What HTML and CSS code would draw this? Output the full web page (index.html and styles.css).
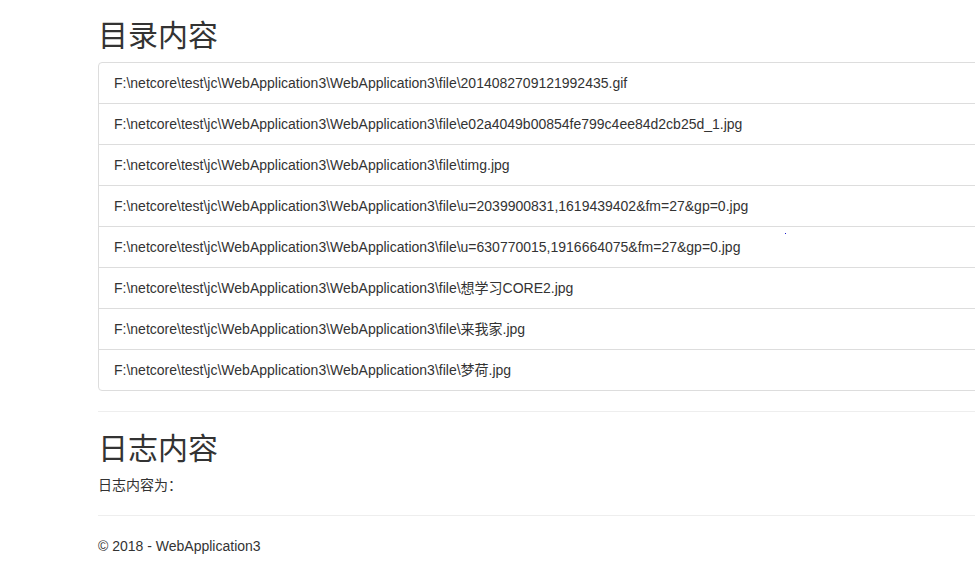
FILE: index.html
```html
<!DOCTYPE html>
<html lang="zh-CN">
<head>
    <meta charset="UTF-8">
    <meta name="viewport" content="width=device-width, initial-scale=1.0">
    <title>WebApplication3</title>
    <link rel="stylesheet" href="styles.css">
</head>
<body>
    <div class="container body-content">
        <h2>目录内容</h2>
        <ul class="list-group">
            <li class="list-group-item">F:\netcore\test\jc\WebApplication3\WebApplication3\file\2014082709121992435.gif</li>
            <li class="list-group-item">F:\netcore\test\jc\WebApplication3\WebApplication3\file\e02a4049b00854fe799c4ee84d2cb25d_1.jpg</li>
            <li class="list-group-item">F:\netcore\test\jc\WebApplication3\WebApplication3\file\timg.jpg</li>
            <li class="list-group-item">F:\netcore\test\jc\WebApplication3\WebApplication3\file\u=2039900831,1619439402&amp;fm=27&amp;gp=0.jpg</li>
            <li class="list-group-item">F:\netcore\test\jc\WebApplication3\WebApplication3\file\u=630770015,1916664075&amp;fm=27&amp;gp=0.jpg<span class="stray-dot"></span></li>
            <li class="list-group-item">F:\netcore\test\jc\WebApplication3\WebApplication3\file\想学习CORE2.jpg</li>
            <li class="list-group-item">F:\netcore\test\jc\WebApplication3\WebApplication3\file\来我家.jpg</li>
            <li class="list-group-item">F:\netcore\test\jc\WebApplication3\WebApplication3\file\梦荷.jpg</li>
        </ul>
        <hr>
        <h2>日志内容</h2>
        <p>日志内容为：</p>
        <hr>
        <footer>
            <p>&copy; 2018 - WebApplication3</p>
        </footer>
    </div>
</body>
</html>
```

FILE: styles.css
```css
html, body {
    margin: 0;
    padding: 0;
    overflow: hidden;
    background-color: #fff;
}

body {
    font-family: "Liberation Sans", "Noto Sans CJK SC", sans-serif;
    font-size: 14px;
    line-height: 20px;
    color: #333;
}

.container {
    box-sizing: border-box;
    width: 1170px;
    padding: 0 15px;
    margin-left: 83px;
}

.body-content {
    padding-top: 0;
}

h2 {
    font-size: 30px;
    font-weight: 400;
    line-height: 1.1;
    margin: 20px 0 10px 0;
}

.body-content > h2:first-child {
    margin-top: 19px;
}

p {
    margin: 0 0 10px 0;
}

hr {
    margin: 20px 0;
    border: 0;
    border-top: 1px solid #eee;
    height: 0;
}

.list-group {
    list-style: none;
    padding: 0;
    margin: 0 0 20px 0;
}

.list-group-item {
    position: relative;
    display: block;
    padding: 10px 15px;
    margin-bottom: -1px;
    background-color: #fff;
    border: 1px solid #ddd;
}

.list-group-item:first-child {
    border-top-left-radius: 4px;
    border-top-right-radius: 4px;
}

.list-group-item:last-child {
    margin-bottom: 0;
    border-bottom-left-radius: 4px;
    border-bottom-right-radius: 4px;
}

/* pixel left over from the screenshot */
.stray-dot {
    position: absolute;
    left: 686px;
    top: 6px;
    width: 1px;
    height: 1px;
    background-color: #1a1ad0;
}
```
